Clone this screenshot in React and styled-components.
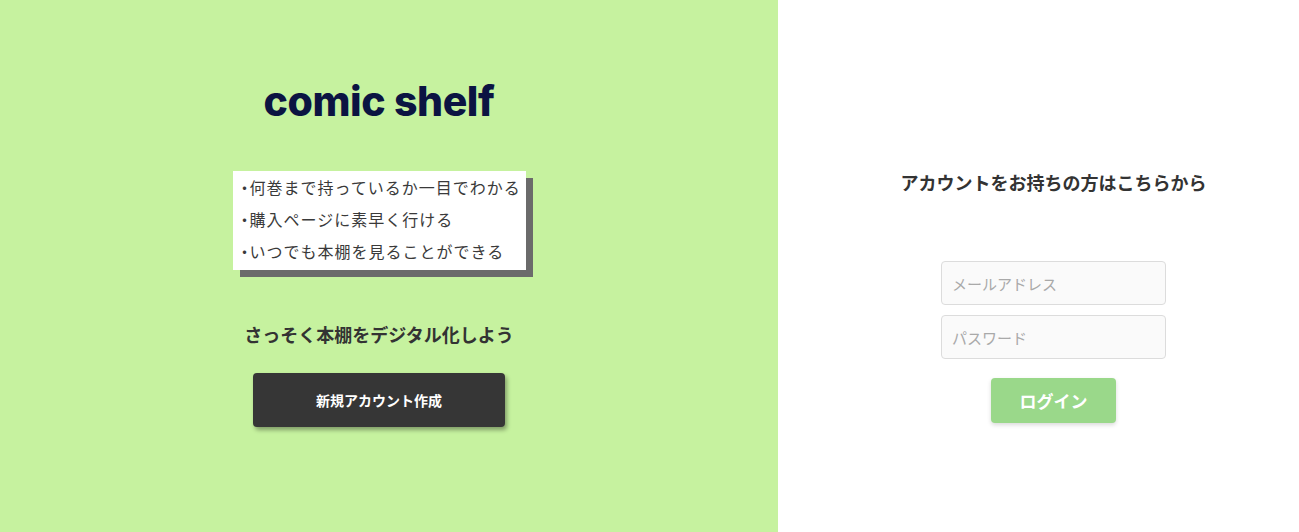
import styled, { createGlobalStyle } from "styled-components";

const GlobalStyle = createGlobalStyle`
  body {
    margin: 0;
    font-family: "Noto Sans CJK JP", "Noto Sans", sans-serif;
    color: #333;
  }
`;

const Page = styled.div`
  display: flex;
  width: 100%;
  height: 532px;
`;

const Left = styled.div`
  width: 778px;
  background-color: #c6f29f;
  display: flex;
  flex-direction: column;
  align-items: center;
  padding-right: 20px;
  box-sizing: border-box;
  padding-top: 74px;
`;

const Logo = styled.h1`
  margin: 0;
  font-family: Inter, Roboto, sans-serif;
  font-weight: 800;
  font-size: 41px;
  letter-spacing: -0.4px;
  color: #0b1442;
  line-height: 54px;
`;

const Features = styled.ul`
  list-style: none;
  margin: 43px 0 0;
  padding: 0 4px 3px 4px;
  width: 293px;
  box-sizing: border-box;
  background: #fff;
  box-shadow: 7px 7px 0 #6b6b6b;
`;

const Feature = styled.li`
  font-size: 16px;
  line-height: 32px;
  letter-spacing: 1px;
  color: #3a3a3a;
  &::before {
    content: "・";
    margin-right: -4px;
  }
`;

const Catch = styled.p`
  margin: 49px 0 0;
  font-size: 18px;
  font-weight: bold;
  color: #333;
  line-height: 30px;
`;

const DarkButton = styled.button`
  margin-top: 24px;
  width: 252px;
  height: 54px;
  border: none;
  border-radius: 4px;
  background: #363636;
  color: #fff;
  font-family: inherit;
  font-size: 14px;
  font-weight: bold;
  box-shadow: 2px 3px 4px rgba(0, 0, 0, 0.35);
  cursor: pointer;
`;

const Right = styled.div`
  flex: 1;
  background: #fff;
  display: flex;
  flex-direction: column;
  align-items: center;
  padding-left: 30px;
  padding-top: 167px;
`;

const Heading = styled.h2`
  margin: 0;
  font-size: 18px;
  font-weight: bold;
  color: #333;
  line-height: 30px;
`;

const Form = styled.form`
  display: flex;
  flex-direction: column;
  align-items: center;
  gap: 10px;
  margin-top: 64px;
`;

const Input = styled.input`
  width: 225px;
  height: 44px;
  box-sizing: border-box;
  border: 1px solid #dcdcdc;
  border-radius: 4px;
  background: #fafafa;
  padding: 0 10px;
  font-family: inherit;
  font-size: 15px;
  color: #333;
  &::placeholder {
    color: #a9a9a9;
  }
`;

const LoginButton = styled.button`
  margin-top: 9px;
  width: 125px;
  height: 45px;
  border: none;
  border-radius: 4px;
  background: #9ad88a;
  color: #fff;
  font-family: inherit;
  font-size: 17px;
  font-weight: bold;
  box-shadow: 0 2px 4px rgba(0, 0, 0, 0.15);
  cursor: pointer;
`;

const features = [
  "何巻まで持っているか一目でわかる",
  "購入ページに素早く行ける",
  "いつでも本棚を見ることができる",
];

export default function App() {
  return (
    <>
      <GlobalStyle />
      <Page>
        <Left>
          <Logo>comic shelf</Logo>
          <Features>
            {features.map((f) => (
              <Feature key={f}>{f}</Feature>
            ))}
          </Features>
          <Catch>さっそく本棚をデジタル化しよう</Catch>
          <DarkButton type="button">新規アカウント作成</DarkButton>
        </Left>
        <Right>
          <Heading>アカウントをお持ちの方はこちらから</Heading>
          <Form onSubmit={(e) => e.preventDefault()}>
            <Input type="email" placeholder="メールアドレス" />
            <Input type="password" placeholder="パスワード" />
            <LoginButton type="submit">ログイン</LoginButton>
          </Form>
        </Right>
      </Page>
    </>
  );
}
